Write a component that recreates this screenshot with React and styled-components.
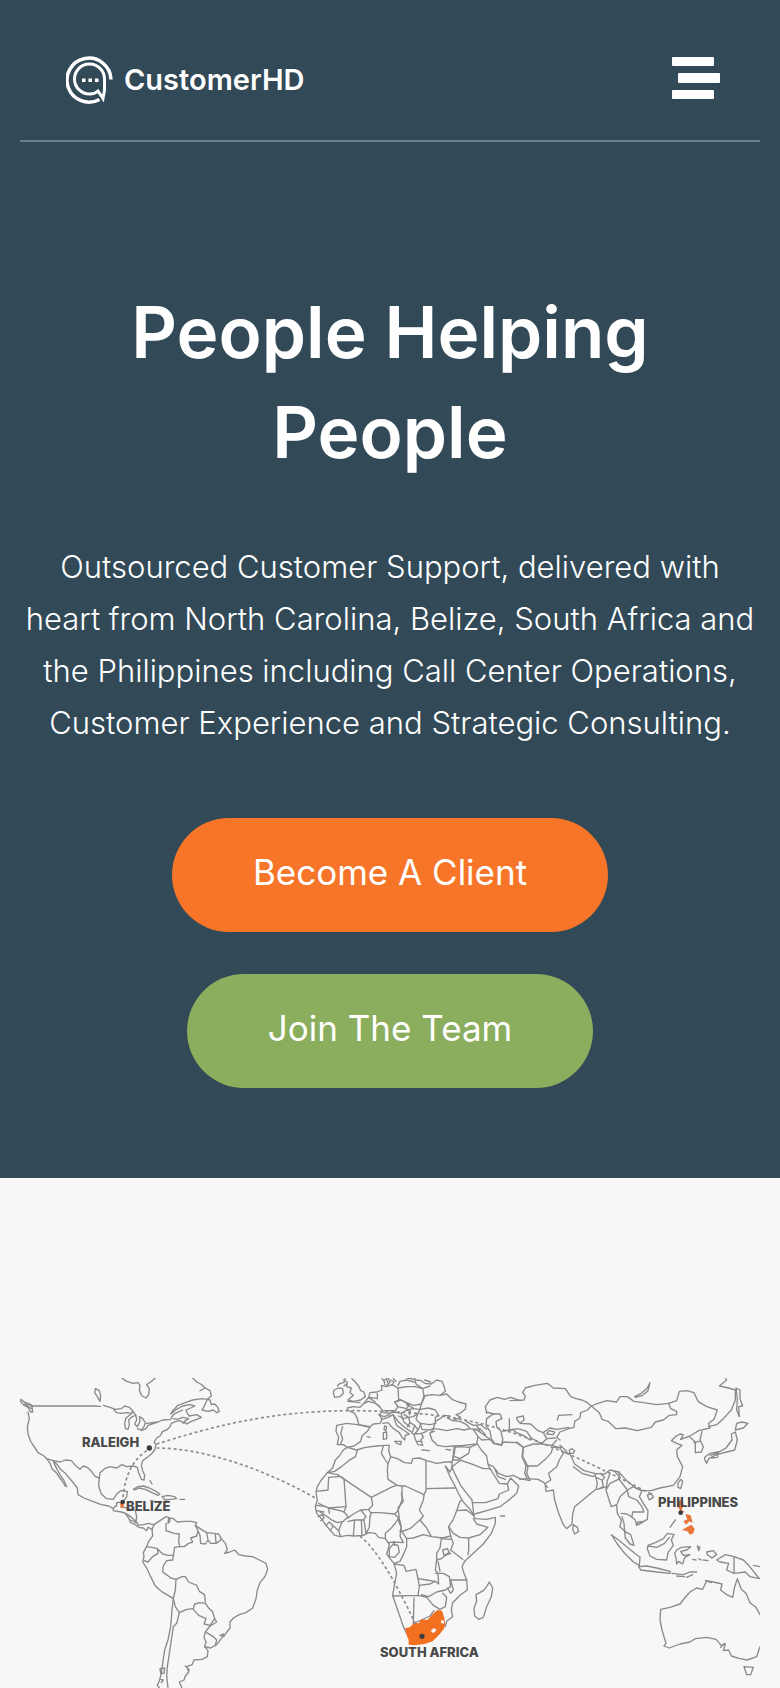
import styled, { createGlobalStyle } from "styled-components";

const GlobalStyle = createGlobalStyle`
  * {
    box-sizing: border-box;
  }

  body {
    margin: 0;
    background-color: #f7f7f7;
    font-family: "Inter", "Liberation Sans", sans-serif;
  }
`;

const Hero = styled.div`
  display: flex;
  flex-direction: column;
  padding: 0 20px 90px;
  background-color: #324957;
  color: #ffffff;
`;

const Header = styled.header`
  display: flex;
  align-items: center;
  justify-content: space-between;
  padding: 55px 40px 35px 46px;
  border-bottom: 2px solid #6b818e;
`;

const Logo = styled.a`
  display: flex;
  align-items: center;
  gap: 10px;
  color: #ffffff;
  font-size: 29px;
  font-weight: 600;
  line-height: 50px;
  text-decoration: none;
`;

const MenuButton = styled.button`
  display: flex;
  padding: 0 0 4px;
  border: none;
  background: none;
  color: #ffffff;
  cursor: pointer;
`;

const HeroContent = styled.main`
  display: flex;
  flex-direction: column;
  align-items: center;
  padding-top: 140px;
  text-align: center;
`;

const Title = styled.h1`
  max-width: 600px;
  margin: 0;
  font-size: 71px;
  font-weight: 600;
  line-height: 100px;
`;

const Description = styled.p`
  margin: 59px 0 69px;
  font-size: 31px;
  font-weight: 300;
  line-height: 52px;
`;

const Actions = styled.div`
  display: flex;
  flex-direction: column;
  align-items: center;
  gap: 42px;
`;

const ActionLink = styled.a`
  padding: 28px 81px 34px;
  border-radius: 57px;
  background-color: ${({ $color }) => $color};
  color: #ffffff;
  font-size: 35px;
  line-height: 52px;
  text-decoration: none;
`;

const MapSection = styled.section`
  padding: 200px 20px 0;
`;

const Map = styled.svg`
  display: block;
  width: 100%;
  height: auto;
`;

const Borders = styled.g`
  fill: none;
  stroke: #8a8a8a;
  stroke-width: 4;
  stroke-linejoin: round;
  stroke-linecap: round;
`;

const Routes = styled.g`
  fill: none;
  stroke: #8c8c8c;
  stroke-width: 5;
  stroke-dasharray: 9 8;
`;

const MapLabel = styled.text`
  fill: #484848;
  font-size: 13px;
  font-weight: 800;
`;

const americas = [
  "M366 54L380 64L400 70L414 68L420 76L418 92L426 108L438 114L446 104L448 86L440 74L452 66L466 54",
  "M286 86L298 92L302 106L300 124L292 110L284 98Z",
  "M578 54L590 66L602 72L616 84L600 92M616 84L630 92L634 108L622 118L606 116L578 120L556 128L534 136L518 152L512 162L530 148L548 138L570 134L584 138L572 144L558 150L562 160L568 168L590 164L604 172L590 178L574 184L560 192L552 184L566 176L548 172L532 178L520 176",
  "M622 118L612 140L606 150L624 154L640 150L650 158L658 154L652 140L644 132L634 134L630 120Z",
  "M60 118L74 126L90 132L98 138L278 138L302 139M60 122L72 136L84 142L92 156L98 156L96 140L88 132L74 134M66 120L82 136L94 146",
  "M84 156L88 176L82 200L84 222L92 244L104 262L114 278L132 288L140 296L150 310L156 326L170 340L184 360L196 378L200 380L192 362L180 344L172 330L164 314L160 302L170 312L180 326L194 338L206 352L218 366L232 384L234 404L252 414L278 424L304 434L326 438L340 446L340 452L364 456L376 460L386 474L392 488L406 494L416 502L430 504L440 512L444 502L456 508",
  "M140 296L160 302L180 306L196 300L214 302L226 316L240 328L250 318L262 322L276 336L286 350L298 354",
  "M298 354L300 338L314 326L330 320L350 324L366 314L380 320L400 318L412 322L416 338L424 358L432 360L434 346L428 332L424 316L428 302L444 290L456 280L464 270L468 254L462 246L470 234L480 228L488 214L500 210L510 200L514 190L528 184L540 182L552 190",
  "M298 354L296 378L304 402L320 416L340 418L350 402L362 392L382 394L380 410L370 424L366 440",
  "M340 446L346 438L350 438L350 428L366 426M366 440L384 446L406 452L410 470L408 484L416 496L430 494L446 490L460 494M376 460L392 470L408 484M392 480L408 488",
  "M310 136L330 142L346 148L364 146L374 138L388 142L398 152L396 160L380 158L364 160L350 158L342 150M378 174L374 190L376 206L384 208L388 194L386 180L396 170L408 166L410 180L404 192L412 200L420 184L418 170L428 176L436 188L432 200L424 210L412 206M396 160L378 174M400 156L408 166",
  "M424 212L438 206L444 196L462 190L474 186L440 190M474 186L488 180L512 178L520 164L526 160L548 150",
  "M400 388L414 380L430 378L448 384L464 392L480 402L474 406L456 398L436 388L418 384L404 390ZM486 410L504 406L524 410L530 416L512 418L496 420ZM540 418H554M450 362L456 372M452 422L464 424",
  "M456 508L462 494L480 482L498 470L506 472L504 490L510 484L508 474L520 476L532 486L552 484L574 484L590 488L586 496L604 508L620 518L640 520L656 522L664 536L676 550L682 568L674 580L690 576L704 570L716 584L736 588L758 590L778 600L798 610L803 628L796 648L780 668L772 690L768 716L758 744L738 758L718 764L700 774L690 786L690 804L676 822L662 838L650 854L632 864L614 860L618 846L612 832L616 816L630 798",
  "M614 860L624 872L622 890L606 898L582 900L576 914L560 920L566 936L556 948L552 960L538 966L546 984M556 918L568 930",
  "M456 508L458 528L446 544L440 560L430 578L432 590L428 606L440 624L452 650L466 678L484 694L504 706L520 716L516 750L512 800L504 840L494 870L488 910L484 940L478 962L472 976L478 984",
  "M520 716L526 740L538 758L530 790L520 800L514 840L508 880L502 920L500 950L504 984M480 926L494 924L492 940L482 940ZM480 958L490 960L484 968",
  "M498 490L498 512L522 520L538 522L536 546L540 560L524 562L520 586L518 600L500 602L490 618L488 636L502 646L512 654L528 658L546 650L556 650L566 666L590 676L598 694L614 704L616 726",
  "M440 560L456 562L472 566L488 582L504 586L520 586M472 566L474 580L458 590L444 606L432 602",
  "M528 658L526 690L520 716M538 758L560 748L580 746L584 732L600 728L616 730L626 744L638 756L644 776L630 796L612 792L618 776L596 766L580 748M644 776L650 786L630 798",
  "M620 818L640 830L650 840L646 856M660 826L670 822L672 830Z",
  "M540 560L552 560L566 550L578 546L572 534L590 528L594 512L586 496M594 512L600 526L602 550L616 552L624 540L620 518M624 540L632 550L648 550L646 524M648 550L660 542L664 536",
];

const europeAndAfrica = [
  "M222 90L236 84L248 86L250 100L240 110L224 112L220 100ZM232 78L240 70L252 68",
  "M250 60L262 66L260 80L274 84L270 98L280 106L264 120L280 124L302 120L316 110L312 96L302 92L296 78L286 66L276 56M264 124L300 128M256 54L252 66M262 70L252 78",
  "M262 144L280 140L300 142L312 130L326 124L346 130L360 142L368 152L358 164L366 178L360 190L340 192L330 200L296 194L292 176L284 160L262 150Z",
  "M312 130L326 112L330 98L350 96L366 90L364 76L380 80L396 74L414 84L416 120L404 126L414 140L406 152L370 152M330 112L352 116L352 100M350 132L360 140M326 112L346 126",
  "M374 74L372 60L384 54L390 66L380 76M392 60L402 66L396 76M400 56L408 64M380 60L386 72M366 56L374 66",
  "M414 84L440 80L466 80L488 86L492 108L484 132L460 136L436 126L418 118M414 76L420 64L440 60L462 66M464 54L468 72L488 86L510 78M440 54L466 58M494 60L512 66",
  "M492 108L514 104L540 106L556 94L552 78L546 64L530 60L514 72L494 70L484 62L470 60",
  "M484 132L490 120L494 108M540 106L560 102L576 118L596 126L618 132L616 148L600 160L588 164L602 172L578 182L562 174L570 168L552 166L540 176L526 184L526 172L536 166L526 150L506 144L480 148L484 132",
  "M404 126L424 120L448 134L440 146L414 140M368 158L386 160L404 156L424 160L440 150L452 154L448 164M440 150L460 146L480 148L474 160L460 170L446 172L432 164M474 160L468 178L480 190L510 194L528 190M480 190L486 208L510 210L522 204M440 134L460 144M356 164L372 170L390 164",
  "M416 168L430 176L446 172L450 188L464 196L474 210L484 190M402 168L416 186L436 204L452 214L462 224L466 238L474 254L488 256L482 240L490 232L484 220L500 214M450 188L442 200M464 196L458 214M474 210L464 222L484 220M470 244L486 244M424 164L432 186L450 200",
  "M366 178L384 172L400 164L404 180L410 196L430 210L448 222L436 226L434 240L426 232L418 218L398 204L384 188L368 190M404 244L424 244L422 254L410 250ZM370 218L380 216L380 236L370 238ZM374 198L380 200L378 212L372 208ZM486 270L508 272M558 268L572 270M322 230L330 232",
  "M230 196L260 190L292 194L330 202L322 214L306 228L302 244L282 258L262 262L250 254L232 254L236 232L228 214ZM248 200L242 220L248 236L242 252",
  "M526 184L520 206L540 208L560 212L590 206L612 210L630 206L620 194L600 184L578 182M618 184L640 196L662 194L680 208M630 206L650 210L668 222L690 238M640 208L660 206L676 224M650 196L660 214",
  "M520 206L510 222L516 240L532 256L556 260L580 258L610 256L650 252L654 230L640 208M510 218L524 214",
  "M250 270L262 262L290 270L316 262L350 258L376 256L388 256L386 272L392 290L412 296L434 308L454 310L458 296L478 294L500 302L530 310L556 306L576 306L582 286L586 260",
  "M250 270L238 288L226 300L218 324L200 340L184 360L172 380L168 396L172 420L166 440L170 460L186 478L196 494L210 510L224 526L242 530L262 526L284 528L310 526L326 518L346 520L356 532L376 536L388 552L384 570L380 582L390 596L402 610L410 640L404 670L398 706L408 736L420 770L430 800L440 820",
  "M292 272L286 290L266 302L244 320L224 334L202 338L232 344M236 350L206 352L204 390L170 394",
  "M232 344L252 356L258 440L204 444L176 430M232 344L334 412L362 398L398 380L412 376L384 358L382 330L384 312L376 300L364 280L370 258M384 312L392 290",
  "M412 376L424 378L436 378L492 404L498 392L498 302M498 386L584 384M556 318L568 346L584 376L596 402L610 426L630 448L642 466M556 318L570 336L578 320",
  "M576 306L576 322L584 340L602 376L620 400L636 420L640 450L640 466M580 300L600 300L640 314L670 326L690 326L704 348L718 370L742 372L752 354L776 378L770 400L742 424L720 440L680 452L644 462M640 428L676 428L714 416L718 402L746 390L742 372",
  "M576 320L600 302M584 262L600 260L630 262L652 252L664 270L680 288L684 312L690 326M630 262L626 280L600 296L584 290M582 262L578 300",
  "M654 230L666 240L690 238L700 250L724 256L730 246L770 248M684 312L700 320L716 340L740 350L760 346L780 356L810 362M770 248L790 262L788 290L804 320L800 340L810 360M704 326L714 350L736 358",
  "M680 176L700 162L720 162L726 176L708 184L710 200L722 212L728 236L726 254L704 250L694 236L690 214L678 196Z",
  "M680 160L676 140L690 120L712 112L734 118L752 112L780 122M748 176L748 210L728 214M748 210L758 208L770 218L790 226L810 240M700 162L680 156",
  "M258 440L252 456L240 452L206 444L208 460M252 456L264 470L250 484L232 488L212 478L196 466L180 456M334 412L338 436L326 448L302 450L280 462L264 474M302 450L318 470L310 480L284 480L264 484M284 480L280 526M304 480L306 524M312 480L318 520M330 470L328 500L320 518",
  "M170 452L192 456M174 470L188 464L192 474L182 482M198 496L208 486L220 498L212 510M220 498L236 512L242 530M236 512L246 486M168 436L200 440",
  "M330 470L334 458L360 458L404 462L414 452L426 420L426 380M326 448L334 462M404 462L416 474L404 492L390 508L376 520L376 536",
  "M424 400L430 424L414 444L418 476L424 500L420 516L450 506L480 480L490 468L478 450L490 420L492 404M414 478L424 504L420 528L430 548L402 546L384 548",
  "M424 512L440 536L460 534L490 524L514 530L500 504L480 480M514 530L548 534L572 528L566 500L580 478L590 452L600 424L606 420M590 452L620 450L640 466",
  "M640 466L646 476L680 478L706 472L706 490L694 520L670 552L640 580L614 604M566 500L580 520L600 532L626 534L660 524L684 502L650 492L640 476M626 534L626 570L624 584M572 528L580 550L572 570L608 598",
  "M614 604L606 620L612 640L620 660L622 690L600 706L578 728L574 750L578 770L560 784L556 800",
  "M440 536L440 560L430 584L420 604L402 610M388 566L400 552L414 556L418 576L404 592L388 590ZM402 546L404 556M402 612L432 616L438 634L468 628L474 656L500 660L526 664L536 672L534 640L526 630L530 600L530 580L540 564L544 536",
  "M474 656L478 680L474 706L398 708M474 706L500 712M462 714L460 790M478 676L510 672L526 664M526 640L550 640L568 650L572 680L556 690L530 696L506 710L484 704M500 712L520 736L540 748L556 740L560 712L548 700",
  "M572 660L620 660M572 660L580 690L572 700L562 684M530 600L544 596L556 586L572 580M548 570L562 566L568 578L552 586ZM534 604L540 634M544 536L572 538M460 790L484 780L510 768L522 752",
  "M688 666L698 684L694 710L680 740L670 772L656 778L644 768L642 744L650 724L648 704L670 692L680 680ZM722 468H734",
];

const asiaAndAustralia = [
  "M0 122L42 120L46 108L38 98L46 84L74 76L112 70L130 84L166 86L182 110L198 116L216 120L232 128L244 138L232 150L212 158L210 174L194 184L192 202L176 206L150 216L140 232L150 240",
  "M142 180L146 166L186 164M20 172L40 168L42 180L30 190L22 180ZM30 190L62 192L84 212L100 218L120 204L140 208L176 202M100 218L110 236L96 250M110 222L130 224L134 216L118 212ZM0 210L24 206L50 214L64 234L96 252L126 256L140 240M110 236L136 234",
  "M20 246L40 262L36 290L48 318L44 340L52 356L30 358M48 318L82 318L106 298L124 278L128 262L156 262M40 262L70 252L96 252",
  "M52 356L84 358L102 368L112 382M126 256L150 264L160 280L148 300L140 320L116 340L122 360L104 372M150 256L170 274M178 270L186 266L194 272L190 280L180 280Z",
  "M106 376L108 394L130 390L134 420L146 460L160 494L170 506L186 492L188 462L194 440L214 424L240 402L258 388L262 370L256 346M160 276L180 282L194 312L222 332L254 340L284 342L300 330L326 336M190 320L216 340L250 350L258 342M258 352L276 360L280 380L262 388L290 380M270 340L284 352L276 362",
  "M326 336L330 356L300 370L288 390L296 416L304 440L320 434L322 460L334 480L330 500L344 514M190 494L202 502L206 514L194 522L188 508ZM300 340L292 362L288 390M312 332L324 346",
  "M244 138L264 130L290 122L320 126L330 110L352 110L372 124L400 128L440 134L476 130L482 146L500 154L500 164L478 166L460 180L436 186L424 202L382 212L346 204L318 206L294 184L276 178L268 158Z",
  "M374 110L394 100L412 84L420 68L414 92L398 106L376 112",
  "M476 130L500 122L508 94L530 92L552 98L564 124L590 140L622 150L612 178L596 190L600 204L566 212L540 228L512 238",
  "M596 200L620 194L640 176L664 150L676 120L676 90L656 84L628 78L650 60L646 54",
  "M512 238L520 224L510 222L496 230L484 242L500 250L516 256L500 270L502 290L518 320L510 350L490 376L450 384L424 392L396 392L380 386L350 362L326 336",
  "M540 232L556 246L556 278L574 276L580 260L570 240L576 214M552 248L568 244",
  "M584 292L600 280L630 274L648 264L666 240L664 222L676 216L682 240L674 270L650 276L620 284L596 296L590 310L584 298ZM600 286L626 278L622 292L606 294",
  "M676 210L680 190L696 186L714 190L700 204ZM678 84L690 90L690 116L698 138L686 140L688 170L680 150L682 116Z",
  "M504 370L512 358L518 364L512 386L504 382ZM412 406L424 400L430 412L418 420Z",
  "M352 390L370 380L396 392L388 410L400 430L414 452L412 478L392 490L380 496L376 480L364 470L350 462L334 460M330 410L352 390L356 410L380 420L396 440L402 456L368 456L366 470M322 430L330 410M344 514L342 490L336 470M380 496L384 486L400 484M326 356L352 390",
  "M344 514L362 524L372 556L360 552L346 534ZM304 524L326 540L350 560L374 580L390 592L388 616L370 606L344 580L322 552ZM386 620L410 618L440 624L480 634L480 640L440 636L392 630ZM486 640L520 644L540 636L560 636M530 652L548 644M500 648L524 650",
  "M412 566L414 556L436 548L460 536L472 520L492 524L484 540L490 556L474 578L470 600L440 598L420 588ZM414 558L440 562L464 550L478 532",
  "M500 570L514 562L542 560L530 570L512 574L520 586L540 584L524 592L518 612L506 604L500 612L498 594L494 580ZM562 558L570 562L566 572ZM548 598L558 600M566 596L574 600M580 600L594 602",
  "M590 576L610 572L620 584L606 594L592 584ZM620 600L646 584L672 590L700 600L716 616L732 636L748 656L720 650L706 636L672 640L650 630L656 610L630 606ZM672 590V640M730 616L750 620M480 502L496 480",
  "M750 764L738 742L720 728L708 700L694 688L682 656L674 680L668 712L650 704L632 690L636 672L610 666L590 662L578 688L560 684L540 696L524 714L510 732L480 742L452 748L450 780L456 810L468 850L462 858L478 864L510 852L540 846L556 836L590 832L618 838L634 856L646 852L640 872L656 870L664 888L690 896L712 900L740 890L750 860M586 662L604 668M632 862L644 850",
  "M702 920L730 922L722 944L710 944Z",
];

const routes = [
  "M470 252C620 205 800 152 1060 152C1300 154 1420 180 1530 216C1700 270 1850 350 1950 400",
  "M470 264C600 264 780 320 946 414",
  "M1080 528C1130 570 1180 650 1250 800",
  "M440 272C400 300 375 340 368 420",
];

const labels = [
  { name: "RALEIGH", x: 82, y: 87 },
  { name: "BELIZE", x: 126, y: 151 },
  { name: "SOUTH AFRICA", x: 380, y: 297 },
  { name: "PHILIPPINES", x: 658, y: 147 },
];

function LogoIcon() {
  return (
    <svg width="48" height="50" viewBox="0 0 48 50" fill="none" stroke="currentColor" strokeWidth="3" aria-hidden="true">
      <path d="M45 24.500A22 22 0 1 0 33.500 44.500" strokeWidth="3.500" />
      <path d="M38.500 36V24A15 15 0 1 0 24 39Q29 39 32 36L37 43.500L38.500 35" />
      <path d="M16 23.500h3.500v3.500h-3.500zM22.500 23.500h3.500v3.500h-3.500zM29 23.500h3.500v3.500h-3.500z" fill="currentColor" stroke="none" />
    </svg>
  );
}

function MenuIcon() {
  return (
    <svg width="48" height="42" viewBox="0 0 48 42" fill="currentColor" aria-hidden="true">
      <rect width="42" height="9" rx="1" />
      <rect x="6" y="16" width="42" height="10" rx="1" />
      <rect y="33" width="42" height="9" rx="1" />
    </svg>
  );
}

function WorldMap() {
  return (
    <Map viewBox="20 18 740 310" role="img" aria-label="World map of our locations">
      <g transform="scale(0.333333)">
        <Borders>
          {americas.map((d) => (
            <path key={d} d={d} />
          ))}
        </Borders>
        <Borders transform="translate(780 0)">
          {europeAndAfrica.map((d) => (
            <path key={d} d={d} />
          ))}
        </Borders>
        <Borders transform="translate(1530 0)">
          {asiaAndAustralia.map((d) => (
            <path key={d} d={d} />
          ))}
        </Borders>

        {/* South Africa, with Lesotho and Eswatini left open */}
        <g transform="translate(780 0)">
          <path
            fill="#f37021"
            d="M436 804L450 802L462 788L476 790L484 778L502 780L516 764L532 750L546 752L552 770L556 790L552 806L536 826L518 844L494 852L462 856L446 854L446 840L440 826Z"
          />
          <path fill="#f7f7f7" d="M512 812L522 804L530 810L520 820ZM544 780L553 782L552 791L543 789Z" />
        </g>

        {/* Philippines */}
        <path
          fill="#e8743a"
          transform="translate(1530 0)"
          d="M504 424L516 418L521 436L515 450L524 456L514 458L504 440ZM526 462L542 466L548 488L538 484L528 494L520 484L532 478ZM516 510L530 502L544 494L554 506L550 520L540 524L532 514Z"
        />
        <path fill="#e8743a" d="M360 430L372 428L370 444L362 444Z" />

        <Routes>
          {routes.map((d) => (
            <path key={d} d={d} />
          ))}
        </Routes>

        <g fill="#3c3c3c">
          <circle cx="448" cy="264" r="8" />
          <circle cx="368" cy="426" r="7" />
          <circle cx="1266" cy="829" r="8" />
          <circle cx="2042" cy="458" r="7" />
        </g>
      </g>

      {labels.map(({ name, x, y }) => (
        <MapLabel key={name} x={x} y={y}>
          {name}
        </MapLabel>
      ))}
    </Map>
  );
}

export default function App() {
  return (
    <>
      <GlobalStyle />
      <Hero>
        <Header>
          <Logo href="#">
            <LogoIcon />
            CustomerHD
          </Logo>
          <MenuButton type="button" aria-label="Open menu">
            <MenuIcon />
          </MenuButton>
        </Header>
        <HeroContent>
          <Title>People Helping People</Title>
          <Description>
            Outsourced Customer Support, delivered with heart from North
            Carolina, Belize, South Africa and the Philippines including Call
            Center Operations, Customer Experience and Strategic Consulting.
          </Description>
          <Actions>
            <ActionLink href="#client" $color="#f67528">
              Become A Client
            </ActionLink>
            <ActionLink href="#team" $color="#8bad5e">
              Join The Team
            </ActionLink>
          </Actions>
        </HeroContent>
      </Hero>
      <MapSection>
        <WorldMap />
      </MapSection>
    </>
  );
}
